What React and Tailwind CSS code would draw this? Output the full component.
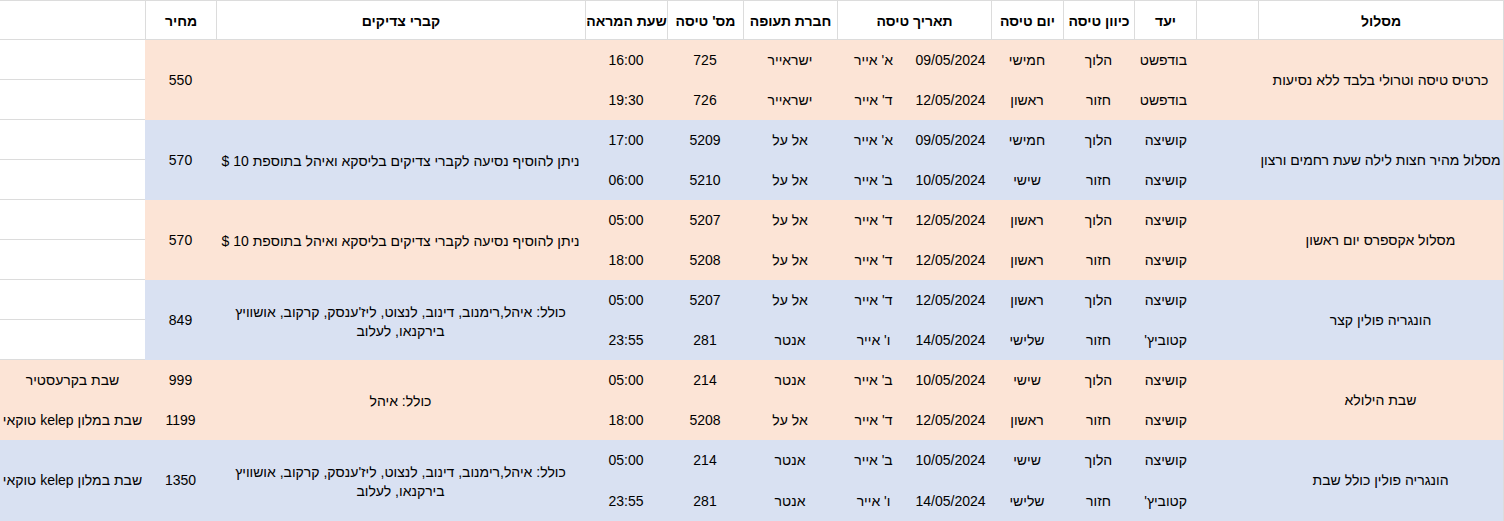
import React from "react";

const GRID =
  "grid grid-cols-[245px_62px_62px_71px_72px_81px_73px_94px_76px_82px_369px_71px_145px]";

const PEACH = "bg-[#fce4d6]";
const BLUE = "bg-[#d9e1f2]";

const GRAVES_LONG = (
  <>
    <span>כולל: איהל,רימנוב, דינוב, לנצוט, ליז'ענסק, קרקוב, אושוויץ</span>
    <span>בירקנאו, לעלוב</span>
  </>
);
const GRAVES_ADD = "ניתן להוסיף נסיעה לקברי צדיקים בליסקא ואיהל בתוספת 10 $";

const groups = [
  {
    bg: PEACH,
    route: "כרטיס טיסה וטרולי בלבד ללא נסיעות",
    rows: [
      ["בודפשט", "הלוך", "חמישי", "09/05/2024", "א' אייר", "ישראייר", "725", "16:00"],
      ["בודפשט", "חזור", "ראשון", "12/05/2024", "ד' אייר", "ישראייר", "726", "19:30"],
    ],
    graves: null,
    price: "550",
    notes: null,
  },
  {
    bg: BLUE,
    route: "מסלול מהיר חצות לילה שעת רחמים ורצון",
    rows: [
      ["קושיצה", "הלוך", "חמישי", "09/05/2024", "א' אייר", "אל על", "5209", "17:00"],
      ["קושיצה", "חזור", "שישי", "10/05/2024", "ב' אייר", "אל על", "5210", "06:00"],
    ],
    graves: GRAVES_ADD,
    price: "570",
    notes: null,
  },
  {
    bg: PEACH,
    route: "מסלול אקספרס יום ראשון",
    rows: [
      ["קושיצה", "הלוך", "ראשון", "12/05/2024", "ד' אייר", "אל על", "5207", "05:00"],
      ["קושיצה", "חזור", "ראשון", "12/05/2024", "ד' אייר", "אל על", "5208", "18:00"],
    ],
    graves: GRAVES_ADD,
    price: "570",
    notes: null,
  },
  {
    bg: BLUE,
    route: "הונגריה פולין קצר",
    rows: [
      ["קושיצה", "הלוך", "ראשון", "12/05/2024", "ד' אייר", "אל על", "5207", "05:00"],
      ["קטוביץ'", "חזור", "שלישי", "14/05/2024", "ו' אייר", "אנטר", "281", "23:55"],
    ],
    graves: GRAVES_LONG,
    price: "849",
    notes: null,
  },
  {
    bg: PEACH,
    route: "שבת הילולא",
    rows: [
      ["קושיצה", "הלוך", "שישי", "10/05/2024", "ב' אייר", "אנטר", "214", "05:00"],
      ["קושיצה", "חזור", "ראשון", "12/05/2024", "ד' אייר", "אל על", "5208", "18:00"],
    ],
    graves: "כולל: איהל",
    price: ["999", "1199"],
    notes: ["שבת בקרעסטיר", "שבת במלון kelep טוקאי"],
  },
  {
    bg: BLUE,
    last: true,
    route: "הונגריה פולין כולל שבת",
    rows: [
      ["קושיצה", "הלוך", "שישי", "10/05/2024", "ב' אייר", "אנטר", "214", "05:00"],
      ["קטוביץ'", "חזור", "שלישי", "14/05/2024", "ו' אייר", "אנטר", "281", "23:55"],
    ],
    graves: GRAVES_LONG,
    price: "1350",
    notes: "שבת במלון kelep טוקאי",
  },
];

const ROW = ["row-start-1", "row-start-2"];
const DATA_COLS = [
  "col-start-3 justify-start pr-[9px]",
  "col-start-4 justify-center",
  "col-start-5 justify-center",
  "col-start-6 justify-center",
  "col-start-7 justify-center",
  "col-start-8 justify-center",
  "col-start-9 justify-center",
  "col-start-10 justify-center",
];

function Header() {
  const cells = [
    ["מסלול", "col-span-1"],
    ["", "col-span-1"],
    ["יעד", "col-span-1"],
    ["כיוון טיסה", "col-span-1"],
    ["יום טיסה", "col-span-1"],
    ["תאריך טיסה", "col-span-2"],
    ["חברת תעופה", "col-span-1"],
    ["מס' טיסה", "col-span-1"],
    ["שעת המראה", "col-span-1"],
    ["קברי צדיקים", "col-span-1"],
    ["מחיר", "col-span-1"],
  ];
  return (
    <div className={`${GRID} h-[40px] bg-white border-t border-[#dcdcdc]`}>
      {cells.map(([t, span], i) => (
        <div
          key={i}
          className={`${span} flex items-center justify-center border-l border-b border-[#dcdcdc] pt-[2px] font-bold whitespace-nowrap`}
        >
          {t}
        </div>
      ))}
      <div className="flex items-center justify-center border-b border-[#dcdcdc]" />
    </div>
  );
}

function Group({ g }) {
  return (
    <div className={`${GRID} ${g.last ? "grid-rows-[40px_41px]" : "grid-rows-[40px_40px]"} ${g.bg}`}>
      <div className="col-start-1 row-start-1 row-span-2 flex items-center justify-center whitespace-nowrap">
        {g.route}
      </div>
      {g.rows.map((r, ri) =>
        r.map((v, ci) => (
          <div
            key={`${ri}-${ci}`}
            className={`${DATA_COLS[ci]} ${ROW[ri]} flex items-center pt-[1px] whitespace-nowrap`}
          >
            {v}
          </div>
        ))
      )}
      <div className="col-start-11 row-start-1 row-span-2 flex flex-col items-center justify-center pt-[3px] leading-[19px] whitespace-nowrap">
        {g.graves}
      </div>
      {Array.isArray(g.price) ? (
        g.price.map((p, i) => (
          <div key={i} className={`col-start-12 ${ROW[i]} flex items-center justify-center pt-[1px]`}>
            {p}
          </div>
        ))
      ) : (
        <div className="col-start-12 row-start-1 row-span-2 flex items-center justify-center">
          {g.price}
        </div>
      )}
      {g.notes === null ? (
        <>
          <div className="col-start-13 row-start-1 bg-white border-b border-[#dcdcdc]" />
          <div className="col-start-13 row-start-2 bg-white border-b border-[#dcdcdc]" />
        </>
      ) : Array.isArray(g.notes) ? (
        g.notes.map((n, i) => (
          <div key={i} className={`col-start-13 ${ROW[i]} flex items-center justify-center pt-[1px] whitespace-nowrap`}>
            {n}
          </div>
        ))
      ) : (
        <div className="col-start-13 row-start-1 row-span-2 flex items-center justify-center whitespace-nowrap">
          {g.notes}
        </div>
      )}
    </div>
  );
}

export default function App() {
  return (
    <div
      dir="rtl"
      className="w-[1504px] bg-white border-r border-[#dcdcdc] text-[14px] text-black font-['Liberation_Sans',Arial,'DejaVu_Sans',sans-serif]"
    >
      <Header />
      {groups.map((g, i) => (
        <Group key={i} g={g} />
      ))}
    </div>
  );
}
